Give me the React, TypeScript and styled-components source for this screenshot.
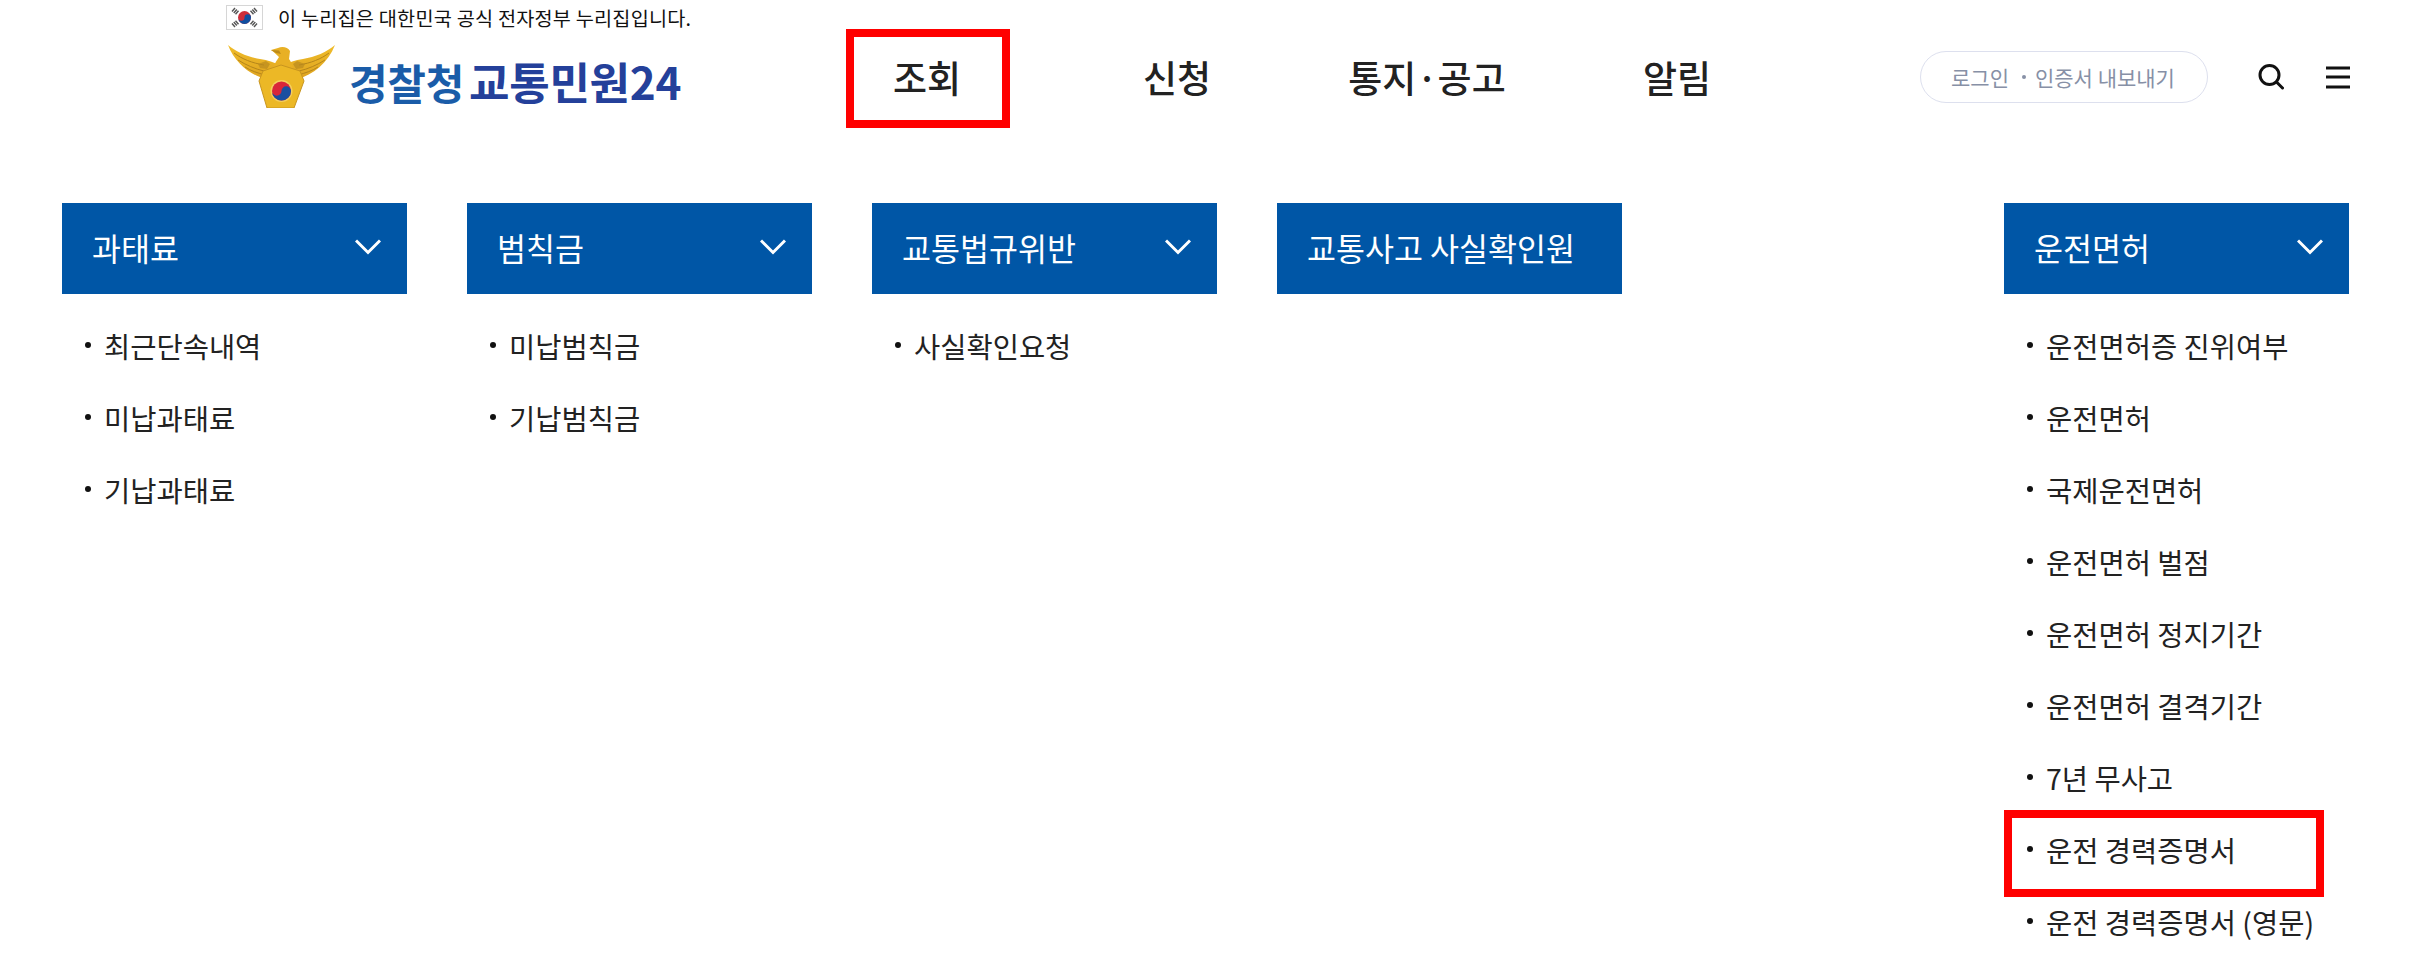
import React from "react";
import styled, { createGlobalStyle } from "styled-components";

const Global = createGlobalStyle`
  html, body { margin: 0; padding: 0; background: #fff; overflow: hidden; }
  body { font-family: "Noto Sans CJK KR", "Noto Sans", sans-serif; color: #222; }
  *, *::before, *::after { box-sizing: border-box; }
`;

const Page = styled.div`
  width: 2419px;
  height: 979px;
  overflow: hidden;
`;

const Header = styled.header`
  height: 203px;
  display: flex;
  align-items: flex-start;
  padding-left: 226px;
`;

const Brand = styled.div`
  width: 577px;
  padding-top: 5px;
  display: flex;
  flex-direction: column;
`;

const GovStrip = styled.div`
  height: 25px;
  display: flex;
  align-items: center;
  gap: 15px;
  font-size: 19.7px;
  letter-spacing: 0.2px;
  color: #111;
  white-space: nowrap;
`;

const LogoRow = styled.div`
  margin-top: 15px;
  margin-left: 2px;
  display: flex;
  align-items: center;
  gap: 14px;
`;

const LogoText = styled.div`
  display: flex;
  align-items: center;
  font-weight: 700;
  height: 63px;
  padding-top: 9px;
  white-space: nowrap;
`;

const LogoWord = styled.span<{ $color: string; $size: number; $gap?: number }>`
  color: ${(p) => p.$color};
  font-size: ${(p) => p.$size}px;
  letter-spacing: -0.3px;
  margin-right: ${(p) => p.$gap ?? 0}px;
`;

const Nav = styled.nav`
  display: flex;
  margin-top: 29px;
`;

const NavItem = styled.div`
  width: 250px;
  height: 99px;
  display: flex;
  justify-content: center;
`;

const NavLabel = styled.a<{ $marked?: boolean }>`
  width: 164px;
  height: 99px;
  display: flex;
  align-items: center;
  justify-content: center;
  padding: 0 2px 4px 0;
  font-size: 37px;
  font-weight: 500;
  color: #222;
  white-space: nowrap;
  border: 8px solid ${(p) => (p.$marked ? "#ff0000" : "transparent")};
`;

const Tools = styled.div`
  margin-left: auto;
  margin-top: 51px;
  padding-right: 69px;
  display: flex;
  align-items: center;
`;

const LoginPill = styled.div`
  width: 288px;
  height: 52px;
  border: 1px solid #dde0ee;
  border-radius: 26px;
  display: flex;
  align-items: center;
  padding-left: 30px;
  font-size: 21px;
  color: #8790a6;
  white-space: nowrap;
  margin-right: 50px;
`;

const PillDot = styled.span`
  width: 4px;
  height: 4px;
  border-radius: 50%;
  background: #8790a6;
  margin: 0 9px 0 13px;
`;

const IconButton = styled.button<{ $gap?: number }>`
  padding: 0;
  border: 0;
  background: none;
  display: flex;
  margin-right: ${(p) => p.$gap ?? 0}px;
`;

const Columns = styled.main`
  display: flex;
  gap: 60px;
  padding: 0 70px 0 62px;
`;

const Column = styled.section<{ $pushed?: boolean }>`
  width: 345px;
  flex: none;
  margin-left: ${(p) => (p.$pushed ? "auto" : "0")};
`;

const ColumnHead = styled.div`
  height: 91px;
  background: #0056a6;
  color: #fff;
  display: flex;
  align-items: center;
  justify-content: space-between;
  padding: 0 26px 3px 30px;
  font-size: 31.5px;
  white-space: nowrap;
`;

const Items = styled.ul`
  list-style: none;
  margin: 18px 0 0;
  padding: 0;
`;

const Item = styled.li<{ $marked?: boolean }>`
  position: relative;
  height: 72px;
  display: flex;
  align-items: center;
  padding-left: 42px;
  padding-bottom: 6px;
  font-size: 28.5px;
  color: #222;
  white-space: nowrap;
  &::before {
    content: "";
    position: absolute;
    left: 23px;
    top: 30px;
    width: 6px;
    height: 6px;
    border-radius: 50%;
    background: #111;
  }
  ${(p) =>
    p.$marked &&
    `&::after {
      content: "";
      position: absolute;
      left: 0;
      top: -6px;
      width: 320px;
      height: 87px;
      border: 8px solid #ff0000;
    }`}
`;

const Flag = () => (
  <svg width="37" height="25" viewBox="0 0 37 25">
    <rect x="0.5" y="0.5" width="36" height="24" fill="#fff" stroke="#d6d6d6" />
    <circle cx="18.5" cy="12.5" r="6.5" fill="#cd2e3a" />
    <path d="M12 12.5a6.5 6.5 0 0 0 13 0a3.2 3.2 0 0 0-6.5 0a3.2 3.2 0 0 1-6.5 0z" fill="#0f4fa0" />
    <g stroke="#555" strokeWidth="1.4">
      <path d="M6 6.5l3-3.5M7.800 8l3-3.500M9.500 9.300l3-3.500" />
      <path d="M24.500 5.800l3 3.500M26.300 4.500l3 3.500M28 3l3 3.500" />
      <path d="M6 18.500l3 3.500M7.800 17l3 3.500M9.500 15.700l3 3.500" />
      <path d="M24.500 19.200l3-3.500M26.300 20.500l3-3.500M28 22l3-3.500" />
    </g>
  </svg>
);

const Emblem = () => (
  <svg width="107" height="63" viewBox="0 0 107 63">
    <defs>
      <linearGradient id="gold" x1="0" y1="0" x2="0" y2="1">
        <stop offset="0" stopColor="#f0bd2a" />
        <stop offset="1" stopColor="#dca01e" />
      </linearGradient>
    </defs>
    <path d="M0 0C8 7 20 12 32 14C40 15 46 17 52 21L52 38L38 34C22 30 7 18 0 0Z" fill="url(#gold)" />
    <path d="M107 0C99 7 87 12 75 14C67 15 61 17 55 21L55 38L69 34C85 30 100 18 107 0Z" fill="url(#gold)" />
    <path d="M6 8C14 14 24 18 36 20M10 15C18 20 27 24 36 26M17 22C23 26 30 28 37 30" stroke="#b5851a" strokeWidth="1" fill="none" />
    <path d="M101 8C93 14 83 18 71 20M97 15C89 20 80 24 71 26M90 22C84 26 77 28 70 30" stroke="#b5851a" strokeWidth="1" fill="none" />
    <path d="M30 19l8-3 4 3-3 5-7-1zM77 19l-8-3-4 3 3 5 7-1z" fill="#b98a1f" opacity="0.7" />
    <path d="M43 5L50 3C54 1 60 2 62 6L61 14C64 18 66 24 65 30L44 30C44 23 47 18 51 12C48 9 46 7 43 5Z" fill="#e8b024" />
    <path d="M43 5L51 5.500L53 9L48 8Z" fill="#bd8a18" />
    <path d="M35 26L53 20L72 26L76 36L66 63L39 63L31 36Z" fill="#ecb826" />
    <path d="M35 26L53 20L72 26L76 36L66 63L39 63L31 36Z" fill="none" stroke="#c8951f" strokeWidth="1" />
    <circle cx="53.500" cy="46" r="11" fill="#f3cf5e" />
    <circle cx="53.500" cy="46" r="9.500" fill="#d9263a" />
    <path d="M44 46a9.500 9.500 0 0 0 19 0a4.750 4.750 0 0 0-9.500 0a4.750 4.750 0 0 1-9.500 0z" fill="#1a4fa0" />
  </svg>
);

const Search = () => (
  <svg width="26" height="26" viewBox="0 0 26 26" fill="none" stroke="#111" strokeWidth="3" strokeLinecap="round">
    <circle cx="11.500" cy="11" r="9.500" />
    <path d="M18.500 18l6 6" />
  </svg>
);

const Burger = () => (
  <svg width="24" height="24" viewBox="0 0 24 24" fill="none" stroke="#111" strokeWidth="3">
    <path d="M0 3h24M0 12h24M0 22h24" />
  </svg>
);

const Chevron = () => (
  <svg width="26" height="16" viewBox="0 0 26 16" fill="none" stroke="#fff" strokeWidth="3">
    <path d="M1 1.500l12 12 12-12" />
  </svg>
);

type MenuColumn = {
  title: string;
  arrow: boolean;
  pushed?: boolean;
  items: string[];
};

const menu: MenuColumn[] = [
  { title: "과태료", arrow: true, items: ["최근단속내역", "미납과태료", "기납과태료"] },
  { title: "범칙금", arrow: true, items: ["미납범칙금", "기납범칙금"] },
  { title: "교통법규위반", arrow: true, items: ["사실확인요청"] },
  { title: "교통사고 사실확인원", arrow: false, items: [] },
  {
    title: "운전면허",
    arrow: true,
    pushed: true,
    items: [
      "운전면허증 진위여부",
      "운전면허",
      "국제운전면허",
      "운전면허 벌점",
      "운전면허 정지기간",
      "운전면허 결격기간",
      "7년 무사고",
      "운전 경력증명서",
      "운전 경력증명서 (영문)",
    ],
  },
];

const navLabels = ["조회", "신청", "통지·공고", "알림"];

export default function App() {
  return (
    <Page>
      <Global />
      <Header>
        <Brand>
          <GovStrip>
            <Flag />
            <span>이 누리집은 대한민국 공식 전자정부 누리집입니다.</span>
          </GovStrip>
          <LogoRow>
            <Emblem />
            <LogoText>
              <LogoWord $color="#1a5ca8" $size={42} $gap={5}>경찰청</LogoWord>
              <LogoWord $color="#24409a" $size={44}>교통민원24</LogoWord>
            </LogoText>
          </LogoRow>
        </Brand>
        <Nav>
          {navLabels.map((label, i) => (
            <NavItem key={label}>
              <NavLabel $marked={i === 0}>{label}</NavLabel>
            </NavItem>
          ))}
        </Nav>
        <Tools>
          <LoginPill>
            로그인
            <PillDot />
            인증서 내보내기
          </LoginPill>
          <IconButton $gap={42}>
            <Search />
          </IconButton>
          <IconButton>
            <Burger />
          </IconButton>
        </Tools>
      </Header>
      <Columns>
        {menu.map((col) => (
          <Column key={col.title} $pushed={col.pushed}>
            <ColumnHead>
              {col.title}
              {col.arrow && <Chevron />}
            </ColumnHead>
            <Items>
              {col.items.map((item) => (
                <Item key={item} $marked={item === "운전 경력증명서"}>
                  {item}
                </Item>
              ))}
            </Items>
          </Column>
        ))}
      </Columns>
    </Page>
  );
}
